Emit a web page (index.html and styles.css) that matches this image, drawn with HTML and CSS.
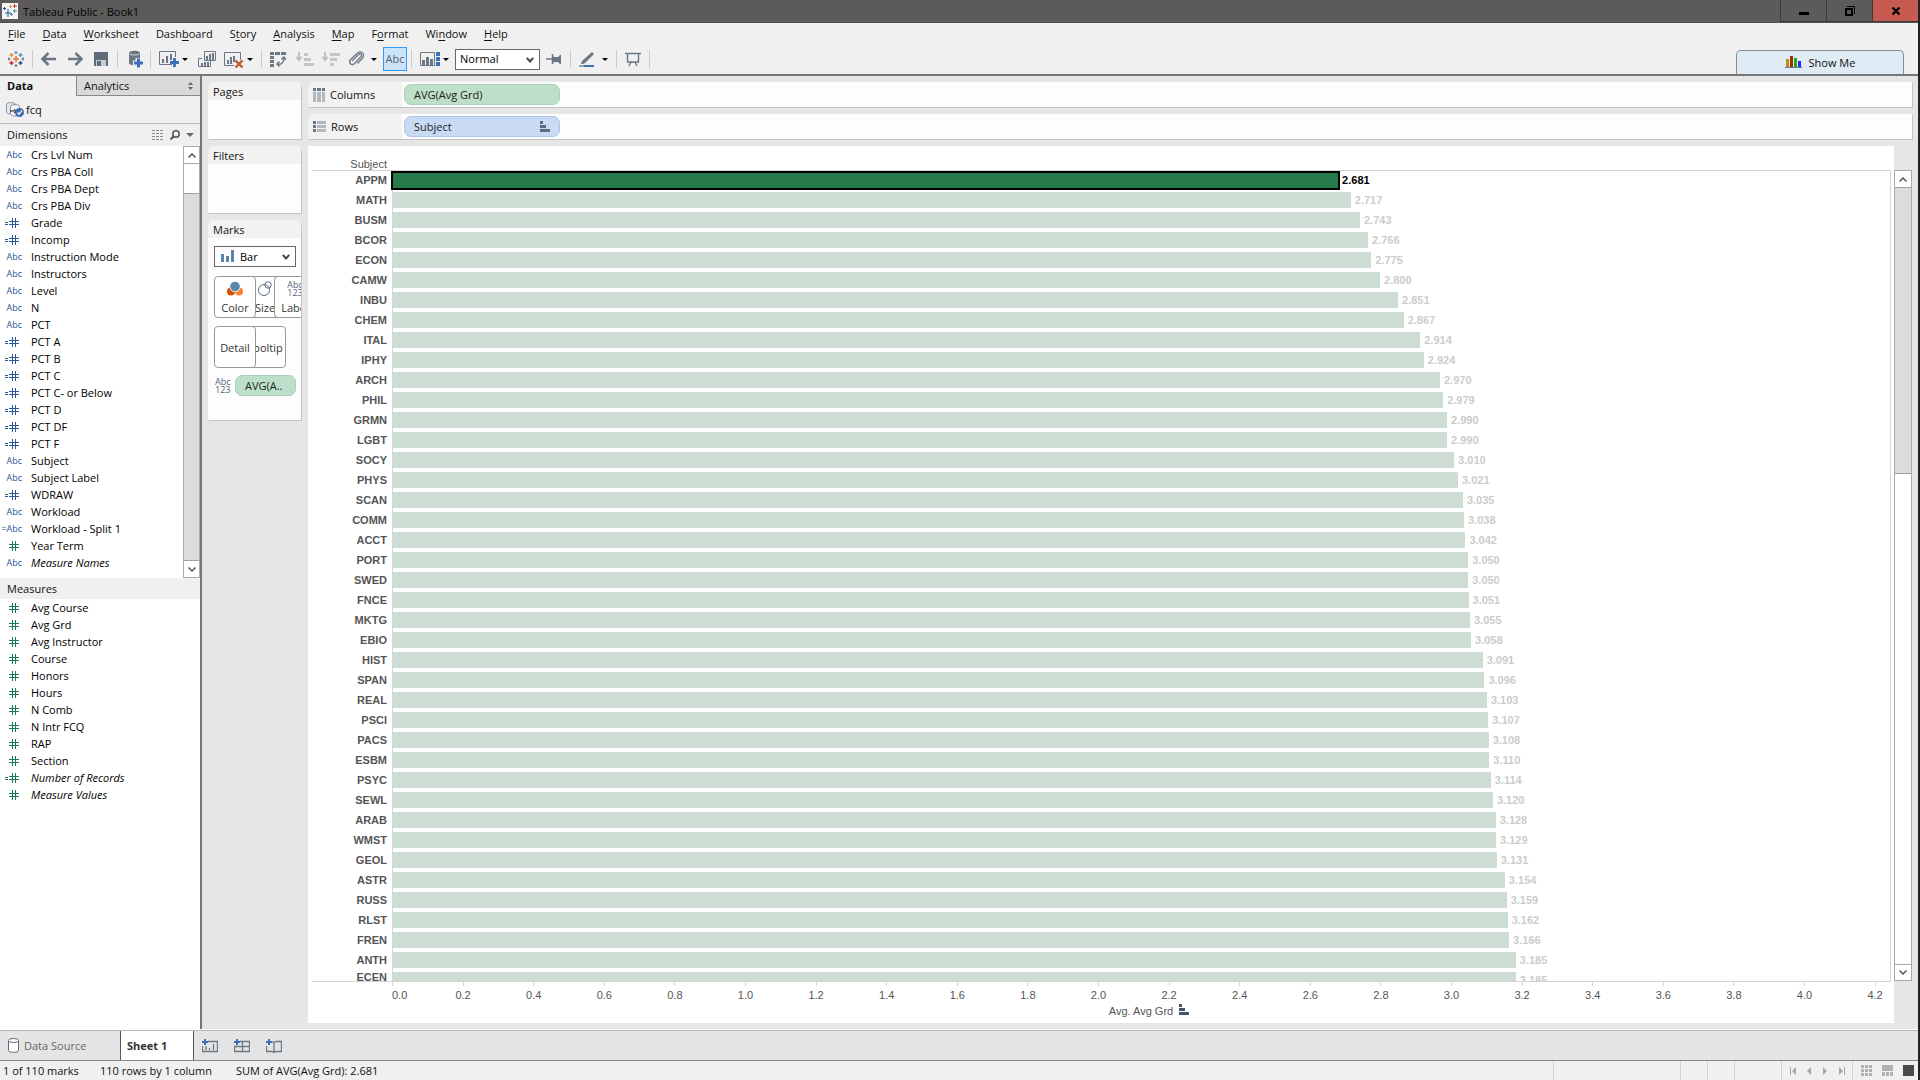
FILE: index.html
```html
<!DOCTYPE html>
<html lang="en">
<head>
<meta charset="utf-8">
<title>Tableau Public - Book1</title>
<link rel="stylesheet" href="styles.css">
</head>
<body>
<svg class="defs" width="0" height="0" aria-hidden="true">
  <symbol id="num" viewBox="0 0 10 10"><path d="M3.5 0v10M6.5 0v10M0 3.5h10M0 6.5h10" stroke="currentColor" fill="none" shape-rendering="crispEdges"/></symbol>
  <symbol id="calc" viewBox="0 0 14 10"><path d="M7.5 0v10M10.5 0v10M4 3.5h10M4 6.5h10M0 4.5h3M0 6.5h3" stroke="currentColor" fill="none" shape-rendering="crispEdges"/></symbol>
  <symbol id="sorted" viewBox="0 0 10 11"><path d="M0 0h3v3H0zM0 4h6v3H0zM0 8h10v3H0z" fill="currentColor"/></symbol>
  <symbol id="up" viewBox="0 0 8 5"><path d="M.5 4.500L4 1l3.500 3.500" stroke="#555" stroke-width="1.500" fill="none"/></symbol>
  <symbol id="down" viewBox="0 0 8 5"><path d="M.5 .5L4 4 7.500 .5" stroke="#555" stroke-width="1.500" fill="none"/></symbol>
</svg>
<div class="app">
  <header class="titlebar">
    <svg width="16" height="16" viewBox="0 0 16 16"><path d="M0 0h16v16H0z" fill="#f5f5f5"/><g fill="none"><path d="M6 6v8M3 10h6M2.500 4v3M1 5.500h3" stroke="#1f4e8c"/><path d="M8.500 2v3M7 3.500h3" stroke="#e8912d"/><path d="M12.500 1v4M11 3h4" stroke="#c0392b"/><path d="M12.500 6v4M11 8h4M9.500 10v3M8 11.500h3" stroke="#4a90a4"/></g></svg>
    <span class="window-title">Tableau Public - Book1</span>
    <div class="window-buttons">
      <button aria-label="Minimize"><svg width="10" height="10"><path d="M0 6h10v3H0z"/></svg></button>
      <button aria-label="Restore"><svg width="10" height="10"><path d="M1 3h6v6H1z" fill="none" stroke="#000" stroke-width="2"/><path d="M2 .5h7.500v7.500" fill="none" stroke="#000"/></svg></button>
      <button class="close" aria-label="Close"><svg width="10" height="10"><path d="M1.500 1.500l7 7M8.500 1.500l-7 7" stroke="#000" stroke-width="2.200"/></svg></button>
    </div>
  </header>

  <div class="bars">
    <div class="bars-left">
      <nav class="menu">
        <a href="#"><u>F</u>ile</a><a href="#"><u>D</u>ata</a><a href="#"><u>W</u>orksheet</a><a href="#">Dash<u>b</u>oard</a><a href="#">S<u>t</u>ory</a><a href="#"><u>A</u>nalysis</a><a href="#"><u>M</u>ap</a><a href="#">F<u>o</u>rmat</a><a href="#">Wi<u>n</u>dow</a><a href="#"><u>H</u>elp</a>
      </nav>
      <div class="toolbar">
        <button aria-label="Start page"><svg width="16" height="16"><g fill="none" stroke-width="1.300"><path d="M8 5v6M5 8h6" stroke="#e8762d" stroke-width="1.600"/><path d="M8 0v3M6.500 1.500h3M8 13v3M6.500 14.500h3" stroke="#7a8fb5"/><path d="M3.500 2v4M1.500 4h4" stroke="#e8912d"/><path d="M12.500 2v4M10.500 4h4" stroke="#5b9aa8"/><path d="M3.500 10v4M1.500 12h4" stroke="#c72035"/><path d="M12.500 10v4M10.500 12h4" stroke="#2d4a80"/><path d="M1 6.500v3M0 8h2.500M15 6.500v3M13.500 8H16" stroke="#6b7a99"/></g></svg></button>
        <i class="sep"></i>
        <button aria-label="Undo"><svg width="16" height="16"><path d="M15 8H2M7.500 2L1.500 8l6 6" fill="none" stroke="#6b7784" stroke-width="2.600"/></svg></button>
        <button aria-label="Redo"><svg width="16" height="16"><path d="M1 8h13M8.500 2l6 6-6 6" fill="none" stroke="#6b7784" stroke-width="2.600"/></svg></button>
        <button aria-label="Save"><svg width="16" height="16"><path d="M1 1h14v14H1z" fill="#5d6b7a"/><path d="M3 9h10v6H3z" fill="#c9ced4"/><path d="M4 10h4v5H4z" fill="#5d6b7a"/></svg></button>
        <i class="sep"></i>
        <button aria-label="New data source"><svg width="16" height="16"><path d="M3 2c0-3 11-3 11 0v10c0 3-11 3-11 0z" fill="#6b7784"/><path d="M3.500 2.500c0 2 10 2 10 0" stroke="#d5d9de" fill="none"/><path d="M12 7v10M7 12h10" stroke="#f0f0f0" stroke-width="5"/><path d="M12.500 7.500v9M8 12h9" stroke="#3d6fb6" stroke-width="3"/></svg></button>
        <i class="sep"></i>
        <button class="drop" aria-label="New worksheet"><svg width="20" height="16"><path d="M.5 .5h16v13H.5z" fill="none" stroke="#6b7784"/><path d="M3 8h2v4H3zM7 5h2v7H7zM11 3h2v9h-2z" fill="#6b7784"/><path d="M15 6v10M10 11h10" stroke="#f0f0f0" stroke-width="4"/><path d="M15.500 7v9M11 11.500h9" stroke="#3d6fb6" stroke-width="2.800"/></svg><b class="caret"></b></button>
        <button aria-label="Duplicate"><svg width="18" height="16"><path d="M6.500 .5h11v9h-11z" fill="#f0f0f0" stroke="#6b7784"/><path d="M4 7.500H.5v8h12V10" fill="none" stroke="#6b7784"/><path d="M8 5h2v4H8zM11 3h2v6h-2zM14 2h2v7h-2zM3 12h2v3H3zM6 11h2v4H6zM9 11h2v4H9z" fill="#6b7784"/></svg></button>
        <button class="drop" aria-label="Clear sheet"><svg width="20" height="16"><path d="M10 14.500H.5V1.500h16V9" fill="none" stroke="#6b7784"/><path d="M3 9h2v4H3zM6 6h2v7H6zM9 5h2v6H9z" fill="#6b7784"/><path d="M11.500 9.500l7 7M18.500 9.500l-7 7" stroke="#c4532f" stroke-width="2.400"/></svg><b class="caret"></b></button>
        <i class="sep"></i>
        <button aria-label="Swap rows and columns"><svg width="16" height="16"><path d="M0 1h4v3H0zM5 1h5v3H5zM11 1h5v3h-5zM0 5h4v3H0zM0 9h4v3H0zM0 13h4v3H0z" fill="#6b7784"/><path d="M7 13c4 1 7-1 7-6M11.500 8.500L14 6l2 2.500M9.500 10.500L7 13l2.500 2.500" fill="none" stroke="#6b7784" stroke-width="1.500"/></svg></button>
        <button aria-label="Sort ascending"><svg width="18" height="16"><path d="M3 1v8M.5 6L3 9l2.500-3" fill="none" stroke="#bfbfbf" stroke-width="2"/><path d="M8 2h4v3H8zM8 7h7v3H8zM8 12h10v3H8z" fill="#c6c6c6"/></svg></button>
        <button aria-label="Sort descending"><svg width="18" height="16"><path d="M3 1v8M.5 6L3 9l2.500-3" fill="none" stroke="#bfbfbf" stroke-width="2"/><path d="M8 2h10v3H8zM8 7h7v3H8zM8 12h4v3H8z" fill="#c6c6c6"/></svg></button>
        <button class="drop clip" aria-label="Group members"><svg width="18" height="16"><path d="M4 10l6.500-6.500c2-2 4 .5 2.500 2.200L6.500 12.500c-3 2.500-6.500-.5-4-4L9.500 2c3.500-3 8 1 5 5l-5 5.500" fill="none" stroke="#6b7784" stroke-width="1.300"/></svg><b class="caret"></b></button>
        <button class="abc" aria-pressed="true">Abc</button>
        <i class="sep"></i>
        <button class="drop" aria-label="Show/hide cards"><svg width="20" height="16"><path d="M.5 1.500h14v13H.5z" fill="none" stroke="#6b7784"/><path d="M2 9h3v5H2zM6 6h3v8H6zM10 8h3v6h-3z" fill="#6b7784"/><path d="M16 1h4v4h-4zM16 6h4v4h-4zM16 11h4v4h-4z" fill="#3d6fb6"/></svg><b class="caret"></b></button>
        <div class="select fit"><select aria-label="Fit"><option>Normal</option></select><svg class="chev" width="8" height="7"><path d="M.8 .8L4 4.500 7.200 .8" fill="none" stroke="#444" stroke-width="2"/></svg></div>
        <button aria-label="Fix axes"><svg width="16" height="16"><path d="M0 8h6M6.500 3v10" stroke="#6b7784" stroke-width="1.500"/><path d="M6 4l2 2h4l2-2h1v9h-1l-2-2H8l-2 2z" fill="#6b7784"/></svg></button>
        <i class="sep"></i>
        <button class="drop" aria-label="Highlight"><svg width="16" height="16"><path d="M13 1l2 2-9 9-2 1-2 0 1-3z" fill="#6b7784"/><path d="M0 14h5v2H0z" fill="#9aa3ad"/><path d="M5 14h10v2H5z" fill="#3d6fb6"/></svg><b class="caret"></b></button>
        <i class="sep"></i>
        <button aria-label="Presentation mode"><svg width="16" height="16"><path d="M0 2.500h16M2.500 3v8h11V3M6 11l-2 4M10 11l2 4" fill="none" stroke="#6b7784" stroke-width="1.400"/></svg></button>
        <i class="sep"></i>
      </div>
    </div>
    <button class="show-me"><svg width="17" height="13"><path d="M1 3h3v8H1z" fill="#c09000"/><path d="M5 0h3v11H5z" fill="#a03000"/><path d="M9 2h3v9H9z" fill="#22aa22"/><path d="M13 5h3v6h-3z" fill="#2a2aff"/><path d="M0 11h17v1H0z" fill="#66798c"/></svg>Show Me</button>
  </div>

  <div class="workspace">
    <aside class="side">
      <div class="side-tabs">
        <button class="side-tab active">Data</button>
        <button class="side-tab">Analytics<svg width="5" height="8"><path d="M0 3l2.500-3L5 3zM0 5l2.500 3L5 5z" fill="#666"/></svg></button>
      </div>
      <div class="source"><svg width="18" height="16"><path d="M.5 2.500c0-2.500 9-2.500 9 0V11c-3 2-9 1-9-1z" fill="#e6e9ec" stroke="#8b949e"/><path d="M4.500 4.500c0-2.500 9-2.500 9 0V13c-3 2-9 1-9-1z" fill="#f4f4f4" stroke="#8b949e"/><path d="M4 9h6M8 7l2 2-2 2" stroke="#222" fill="none"/><circle cx="13.500" cy="10.500" r="4.500" fill="#3d6fb6"/><path d="M11.500 10.500l1.500 1.700 3-3.500" stroke="#fff" fill="none" stroke-width="1.300"/></svg>fcq</div>
      <div class="section-head first"><span>Dimensions</span>
        <svg width="12" height="10"><path d="M0 .5h12M0 3.500h12M0 6.500h12M0 9.500h12" stroke="#8a8f96" stroke-dasharray="3 1"/></svg>
        <svg width="10" height="10"><circle cx="6" cy="4" r="3.200" fill="none" stroke="#555" stroke-width="1.500"/><path d="M4 6L.5 9.500" stroke="#555" stroke-width="2"/></svg>
        <svg width="8" height="4"><path d="M0 0h8L4 4z" fill="#667"/></svg>
      </div>
      <div class="dims">
        <ul class="fields">
          <li><i>Abc</i>Crs Lvl Num</li>
          <li><i>Abc</i>Crs PBA Coll</li>
          <li><i>Abc</i>Crs PBA Dept</li>
          <li><i>Abc</i>Crs PBA Div</li>
          <li><i><svg class="c"><use href="#calc"/></svg></i>Grade</li>
          <li><i><svg class="c"><use href="#calc"/></svg></i>Incomp</li>
          <li><i>Abc</i>Instruction Mode</li>
          <li><i>Abc</i>Instructors</li>
          <li><i>Abc</i>Level</li>
          <li><i>Abc</i>N</li>
          <li><i>Abc</i>PCT</li>
          <li><i><svg class="c"><use href="#calc"/></svg></i>PCT A</li>
          <li><i><svg class="c"><use href="#calc"/></svg></i>PCT B</li>
          <li><i><svg class="c"><use href="#calc"/></svg></i>PCT C</li>
          <li><i><svg class="c"><use href="#calc"/></svg></i>PCT C- or Below</li>
          <li><i><svg class="c"><use href="#calc"/></svg></i>PCT D</li>
          <li><i><svg class="c"><use href="#calc"/></svg></i>PCT DF</li>
          <li><i><svg class="c"><use href="#calc"/></svg></i>PCT F</li>
          <li><i>Abc</i>Subject</li>
          <li><i>Abc</i>Subject Label</li>
          <li><i><svg class="c"><use href="#calc"/></svg></i>WDRAW</li>
          <li><i>Abc</i>Workload</li>
          <li><i>=Abc</i>Workload - Split 1</li>
          <li class="green"><i><svg class="n"><use href="#num"/></svg></i>Year Term</li>
          <li><i>Abc</i><em>Measure Names</em></li>
        </ul>
        <div class="scroll dims-scroll"><button aria-label="Scroll up"><svg width="8" height="5"><use href="#up"/></svg></button><div class="track"><div class="thumb"></div></div><button aria-label="Scroll down"><svg width="8" height="5"><use href="#down"/></svg></button></div>
      </div>
      <div class="section-head"><span>Measures</span></div>
      <ul class="fields measures">
        <li><i><svg class="n"><use href="#num"/></svg></i>Avg Course</li>
        <li><i><svg class="n"><use href="#num"/></svg></i>Avg Grd</li>
        <li><i><svg class="n"><use href="#num"/></svg></i>Avg Instructor</li>
        <li><i><svg class="n"><use href="#num"/></svg></i>Course</li>
        <li><i><svg class="n"><use href="#num"/></svg></i>Honors</li>
        <li><i><svg class="n"><use href="#num"/></svg></i>Hours</li>
        <li><i><svg class="n"><use href="#num"/></svg></i>N Comb</li>
        <li><i><svg class="n"><use href="#num"/></svg></i>N Intr FCQ</li>
        <li><i><svg class="n"><use href="#num"/></svg></i>RAP</li>
        <li><i><svg class="n"><use href="#num"/></svg></i>Section</li>
        <li><i><svg class="c"><use href="#calc"/></svg></i><em>Number of Records</em></li>
        <li><i><svg class="n"><use href="#num"/></svg></i><em>Measure Values</em></li>
      </ul>
    </aside>

    <div class="cards">
      <section class="card pages"><h2>Pages</h2></section>
      <section class="card filters"><h2>Filters</h2></section>
      <section class="card marks"><h2>Marks</h2>
        <div class="select mark-type"><svg class="mark-icon" width="13" height="12"><path d="M0 4h3v8H0zM5 6h3v6H5zM10 0h3v12h-3z" fill="#5a86ad"/></svg><select aria-label="Mark type"><option>Bar</option></select><svg class="chev" width="8" height="7"><path d="M.8 .8L4 4.500 7.200 .8" fill="none" stroke="#444" stroke-width="2"/></svg></div>
        <div class="mark-buttons">
          <button class="front"><svg width="16" height="16"><circle cx="4" cy="10.500" r="4" fill="#d35400"/><circle cx="12" cy="10.500" r="4" fill="#f58231"/><circle cx="8" cy="5.500" r="5.500" fill="#fff"/><circle cx="8" cy="5.500" r="4.800" fill="#5a86ad"/></svg>Color</button>
          <button><svg width="16" height="16"><circle cx="7" cy="9" r="5.500" fill="none" stroke="#5d6b80"/><circle cx="11" cy="4" r="3.200" fill="none" stroke="#5d6b80"/></svg>Size</button>
          <button class="front"><span class="abc123">Abc<br>123</span>Label</button>
        </div>
        <div class="mark-buttons">
          <button class="front">Detail</button>
          <button>Tooltip</button>
        </div>
        <div class="mark-pill"><span class="abc123">Abc<br>123</span><button class="pill green-pill">AVG(A..</button></div>
      </section>
    </div>

    <main class="work">
      <div class="shelf"><div class="shelf-label"><svg width="12" height="14"><path d="M0 0h3v3H0zM4 0h4v3H4zM9 0h3v3H9z" fill="#6b7784"/><path d="M0 4h3v10H0zM4 4h4v10H4zM9 4h3v10H9z" fill="#b4b9c0"/></svg>Columns</div><button class="pill green-pill">AVG(Avg Grd)</button></div>
      <div class="shelf"><div class="shelf-label"><svg width="13" height="11"><path d="M0 0h3v3H0zM0 4h3v3H0zM0 8h3v3H0z" fill="#6b7784"/><path d="M4 0h9v3H4zM4 4h9v3H4zM4 8h9v3H4z" fill="#b4b9c0"/></svg>Rows</div><button class="pill blue-pill">Subject<svg width="10" height="11"><use href="#sorted"/></svg></button></div>
      <div class="view">
        <div class="chart">
          <div class="chart-head">Subject</div>
          <div class="plot" id="plot"></div>
          <div class="axis" id="axis"></div>
          <div class="axis-title">Avg. Avg Grd<svg width="10" height="11"><use href="#sorted"/></svg></div>
        </div>
        <div class="scroll view-scroll"><button aria-label="Scroll up"><svg width="8" height="5"><use href="#up"/></svg></button><div class="track"><div class="thumb"></div></div><button aria-label="Scroll down"><svg width="8" height="5"><use href="#down"/></svg></button></div>
      </div>
    </main>
  </div>

  <nav class="sheet-tabs">
    <button class="sheet-tab source-tab"><svg width="11" height="15"><path d="M.5 2.500v10c0 2.500 10 2.500 10 0v-10" fill="#fff" stroke="#5d6b80"/><ellipse cx="5.500" cy="2.500" rx="5" ry="2" fill="#fff" stroke="#5d6b80"/></svg>Data Source</button>
    <button class="sheet-tab current">Sheet 1</button>
    <button class="new-tab" aria-label="New worksheet"><svg width="16" height="14"><path d="M6 2.500h9.500v10H.5V7M4 11V7M7.500 11V9M11.500 11V5" fill="none" stroke="#6b7784" stroke-width="1.300"/><path d="M3 0v6M0 3h6" stroke="#3d6fb6" stroke-width="2"/></svg></button>
    <button class="new-tab" aria-label="New dashboard"><svg width="16" height="14"><path d="M6 2.500h9.500v10H.5V7M0 7.500h16M8.500 2v11" fill="none" stroke="#6b7784" stroke-width="1.300"/><path d="M3 0v6M0 3h6" stroke="#3d6fb6" stroke-width="2"/></svg></button>
    <button class="new-tab" aria-label="New story"><svg width="16" height="14"><path d="M.5 7v5.500H6l2 1 2-1h5.500v-10H10l-2 1-2-1M8 3v10" fill="none" stroke="#6b7784" stroke-width="1.300"/><path d="M3 0v6M0 3h6" stroke="#3d6fb6" stroke-width="2"/></svg></button>
  </nav>

  <footer class="status">
    <span class="marks-count">1 of 110 marks</span><span class="row-count">110 rows by 1 column</span><span class="sum">SUM of AVG(Avg Grd): 2.681</span>
    <div class="cell w126"></div><div class="cell w26"></div><div class="cell w26"></div><div class="cell w46"></div>
    <div class="cell nav">
      <button aria-label="First"><svg width="7" height="8"><path d="M0 0h1v8H0zM6 0v8L2 4z"/></svg></button>
      <button aria-label="Previous"><svg width="7" height="8"><path d="M5 0v8L1 4z"/></svg></button>
      <button aria-label="Next"><svg width="7" height="8"><path d="M1 0v8l4-4z"/></svg></button>
      <button aria-label="Last"><svg width="7" height="8"><path d="M6 0h1v8H6zM1 0v8l4-4z"/></svg></button>
    </div>
    <div class="cell modes">
      <button aria-label="Sheet sorter"><svg width="11" height="11"><path d="M0 0h3v3H0zM4 0h3v3H4zM8 0h3v3H8zM0 4h3v3H0zM4 4h3v3H4zM8 4h3v3H8zM0 8h3v3H0zM4 8h3v3H4zM8 8h3v3H8z"/></svg></button>
      <button aria-label="Filmstrip"><svg width="11" height="11"><path d="M0 0h11v6H0zM0 7h3v4H0zM4 7h3v4H4zM8 7h3v4H8z"/></svg></button>
      <button class="on" aria-label="Tabs"><svg width="11" height="11"><path d="M0 0h11v11H0z"/></svg></button>
    </div>
  </footer>
</div>
<script src="chart.js"></script>
</body>
</html>
```

FILE: styles.css
```css
* { box-sizing: border-box; }
body { margin: 0; font: 11px/16px "Open Sans", "Noto Sans", sans-serif; color: #111; background: #222; }
button { font: inherit; color: inherit; background: none; border: 0; padding: 0; }
a { color: inherit; text-decoration: none; }
ul { list-style: none; margin: 0; padding: 0; }
h2 { margin: 0; font-size: 11px; font-weight: 400; }
svg { display: block; flex: none; }
.defs { position: absolute; }

.app { height: 100vh; display: flex; flex-direction: column; border-right: 2px solid #222; background: #f0f0f0; overflow: hidden; }

.titlebar { height: 23px; flex: none; display: flex; background: #5c5b59; padding-left: 2px; border-bottom: 1px solid #52514f; align-items: center; color: #000; }
.window-title { margin-left: 5px; flex: 1; padding-top: 2px; }
.window-buttons { display: flex; align-self: stretch; }
.window-buttons button { width: 46px; border-left: 1px solid #3a3a3a; border-bottom: 1px solid #3a3a3a; display: flex; align-items: center; justify-content: center; }
.window-buttons .close { background: #c75b52; }

.bars { display: flex; justify-content: space-between; align-items: flex-end; height: 53px; flex: none; border-bottom: 2px solid #77777a; padding-right: 14px; }
.bars-left { display: flex; flex-direction: column; height: 51px; }
.menu { display: flex; gap: 17px; padding: 3px 8px 0; height: 22px; }
.menu u { text-underline-offset: 2px; }
.toolbar { display: flex; align-items: center; gap: 10px; padding-left: 8px; height: 28px; }
.toolbar button { width: 16px; display: flex; align-items: center; height: 16px; }
.toolbar svg { overflow: visible; }
.toolbar .drop { width: 29px; justify-content: space-between; }
.caret { border: 3px solid transparent; border-top: 3px solid #000; border-bottom: 0; }
.sep { width: 1px; height: 18px; background: #ccc; margin: 0 -2px; }
.toolbar .abc { width: 24px; height: 24px; border: 1px solid #3399ff; background: #cce4fb; margin: 0 -4px; justify-content: center; color: #56616e; }
.select { position: relative; background: #fff; border: 1px solid #666; height: 21px; }
.select select { appearance: none; border: 0; background: none; font: inherit; color: #000; width: 100%; height: 19px; padding: 0 4px; display: block; }
.chev { position: absolute; right: 5px; top: 7px; }
.fit { width: 85px; margin: 0 -4px; }
.show-me { width: 168px; height: 24px; border: 1px solid #8c8c8c; border-bottom: 0; border-radius: 5px 5px 0 0; background: #dfebf5; display: flex; align-items: center; justify-content: center; gap: 7px; }

.workspace { flex: 1; min-height: 0; display: flex; background: #e6e6e6; border-bottom: 1px solid #fff; }
.side { width: 202px; flex: none; background: #fff; border-right: 2px solid #77777a; display: flex; flex-direction: column; }
.side-tabs { display: flex; height: 20px; }
.side-tab { width: 76px; background: #f0f0f0; text-align: left; padding: 0 7px; font-weight: 700; }
.side-tab + .side-tab { flex: 1; width: auto; font-weight: 400; background: #d9d9d9; border-left: 1px solid #888; border-bottom: 1px solid #888; display: flex; align-items: center; justify-content: space-between; }
.source { background: #f0f0f0; height: 28px; padding-left: 6px; gap: 2px; display: flex; align-items: center; border-bottom: 1px solid #bbb; }
.section-head { background: #f0f0f0; height: 21px; flex: none; padding: 0 7px; display: flex; align-items: center; gap: 6px; }
.section-head.first { height: 22px; padding-right: 6px; }
.section-head span { flex: 1; }
.dims { display: flex; height: 432px; flex: none; }
.dims .fields { flex: 1; }
.fields li { height: 17px; display: flex; align-items: center; color: #000; }
.fields li i { width: 31px; padding-right: 9px; display: flex; justify-content: flex-end; font-style: normal; font-size: 9px; color: #2c5797; }
.fields .n { width: 10px; height: 10px; margin-right: 3px; }
.fields .c { width: 14px; height: 10px; margin-right: 3px; }
.fields .green i, .measures li i { color: #1b7a55; }

.scroll { display: flex; flex-direction: column; width: 17px; border: 1px solid #aaa; background: #fff; }
.scroll button { height: 16px; display: flex; align-items: center; justify-content: center; flex: none; }
.track { flex: 1; display: flex; flex-direction: column; }
.thumb { background: #dcdcdc; border: 1px solid #a0a0a0; border-width: 1px 0; }
.dims-scroll .track { border-top: 1px solid #aaa; padding-top: 29px; }
.dims-scroll .thumb { flex: 1; }
.view-scroll .thumb { height: 37%; }
.view-scroll button:last-child { border-top: 1px solid #aaa; }

.cards { width: 93px; flex: none; margin: 6px 0 0 6px; display: flex; flex-direction: column; gap: 7px; }
.card { background: #fdfdfd; border-radius: 6px 6px 0 0; box-shadow: 1px 1px 0 #c4c4c4; overflow: hidden; }
.card h2 { background: #f2f2f1; height: 18px; padding: 2px 5px 0; }
.pages { height: 57px; }
.filters { height: 67px; }
.marks { height: 200px; }
.mark-type { margin: 8px 5px 0 6px; }
.mark-type select { padding-left: 25px; }
.mark-icon { position: absolute; left: 6px; top: 3px; }
.mark-buttons { display: flex; margin: 9px 0 0 6px; }
.mark-buttons + .mark-buttons { margin-top: 8px; }
.mark-buttons button { width: 42px; height: 42px; flex: none; border: 1px solid #999; border-radius: 4px; background: #fff; display: flex; flex-direction: column; align-items: center; justify-content: center; gap: 3px; padding-top: 2px; color: #333; }
.mark-buttons button + button { margin-left: -12px; }
.mark-buttons .front { position: relative; z-index: 1; }
.abc123 { font-size: 9px; line-height: 8px; color: #56657c; }
.mark-pill { display: flex; align-items: center; justify-content: space-between; padding: 7px 5px 0 7px; }
.mark-pill .pill { width: 61px; }

.work { flex: 1; min-width: 0; margin: 6px 6px 6px 7px; display: flex; flex-direction: column; gap: 7px; }
.shelf { height: 25px; flex: none; background: #fdfdfd; box-shadow: 1px 1px 0 #c4c4c4; display: flex; align-items: center; border-radius: 6px 0 0 0; overflow: hidden; }
.shelf-label { width: 94px; height: 25px; background: #f2f2f1; display: flex; align-items: center; gap: 5px; padding-left: 5px; margin-right: 2px; }
.pill { width: 156px; height: 21px; border-radius: 7px; display: flex; align-items: center; justify-content: space-between; padding: 0 9px; color: #222; }
.green-pill { background: #bedfca; border: 1px solid #a9cfb8; }
.blue-pill { background: #c8daf4; border: 1px solid #aac5ea; }
.pill svg { color: #5d6b7a; }
.view { flex: 1; min-height: 0; display: flex; }
.chart { flex: 1; min-width: 0; background: #fff; padding: 0 3px 0 4px; display: flex; flex-direction: column; font: 11px/14px "Liberation Sans", Arial, sans-serif; color: #555; }
.view-scroll { width: 18px; margin: 24px 0 42px; }
.chart-head { width: 75px; text-align: right; height: 24px; padding-top: 11px; flex: none; }
.plot { flex: 1; min-height: 0; overflow: hidden; border-top: 1px solid #d4d4d4; border-bottom: 1px solid #d4d4d4; border-right: 1px solid #d4d4d4; display: flex; flex-direction: column; font-weight: 700; }
.row { display: flex; height: 20px; flex: none; }
.row:first-child { height: 19px; }
.row:last-child { flex: 1; min-height: 0; overflow: hidden; }
.name { width: 80px; flex: none; text-align: right; padding-right: 5px; align-self: center; }
.row:last-child .name { align-self: flex-start; }
.lane { flex: 1; display: flex; border-left: 1px solid #d4d4d4; padding: 2px 0; align-items: center; }
.row:last-child .lane { align-items: flex-start; }
.bar { height: 16px; flex: none; background: #cdddd3; }
.value { margin-left: 4px; line-height: 16px; color: #ccc; }
.row.selected .lane { padding: 0; }
.row.selected .name, .selected .value { line-height: 18px; align-self: flex-start; }
.selected .bar { height: 19px; background: #277a4c; border: 2px solid #000; box-sizing: content-box; height: 15px; border-left-width: 2px; margin-left: -2px; }
.selected .value { color: #000; margin-left: 2px; }
.axis { position: relative; height: 20px; margin-left: 80px; flex: none; }
.tick { position: absolute; top: 0; width: 41px; margin-left: -20px; text-align: center; }
.tick::before { content: ""; display: block; width: 1px; height: 4px; margin: 0 auto 2px; background: #d4d4d4; }
.tick:first-child { margin-left: 0; text-align: left; text-indent: 2px; }
.tick:first-child::before { margin-left: 0; }
.axis-title { margin-left: 80px; height: 21px; padding: 2px 0 0 15px; display: flex; justify-content: center; gap: 6px; flex: none; }
.axis-title svg { color: #44546e; }

.sheet-tabs { height: 31px; flex: none; background: #e4e4e4; border-top: 1px solid #b5b9b5; border-bottom: 1px solid #8a8a8a; display: flex; align-items: center; }
.sheet-tab { align-self: stretch; display: flex; align-items: center; }
.source-tab { width: 120px; padding-left: 8px; gap: 5px; color: #666; }
.current { width: 74px; background: #fff; border: 1px solid #555; border-width: 0 1px; padding-left: 6px; font-weight: 700; color: #333; }
.new-tab { width: 16px; margin: 0 8px; }
.status { height: 19px; flex: none; display: flex; align-items: center; padding-left: 3px; }
.marks-count { width: 97px; }
.row-count { width: 136px; }
.sum { flex: 1; }
.cell { border-left: 1px solid #d0d0d0; align-self: stretch; }
.w126 { width: 127px; }
.w26 { width: 27px; }
.w46 { width: 47px; }
.nav { width: 71px; display: flex; align-items: center; padding-left: 8px; gap: 9px; fill: #a6a6a6; }
.modes { width: 66px; display: flex; align-items: center; padding-left: 8px; gap: 10px; fill: #b0b0b0; }
.modes .on { fill: #4a4a4a; }
```

FILE: chart.js
```javascript
const AXIS_MAX = 4.2465;
const rows = [
  ["APPM", 2.681], ["MATH", 2.717], ["BUSM", 2.743], ["BCOR", 2.766], ["ECON", 2.775],
  ["CAMW", 2.800], ["INBU", 2.851], ["CHEM", 2.867], ["ITAL", 2.914], ["IPHY", 2.924],
  ["ARCH", 2.970], ["PHIL", 2.979], ["GRMN", 2.990], ["LGBT", 2.990], ["SOCY", 3.010],
  ["PHYS", 3.021], ["SCAN", 3.035], ["COMM", 3.038], ["ACCT", 3.042], ["PORT", 3.050],
  ["SWED", 3.050], ["FNCE", 3.051], ["MKTG", 3.055], ["EBIO", 3.058], ["HIST", 3.091],
  ["SPAN", 3.096], ["REAL", 3.103], ["PSCI", 3.107], ["PACS", 3.108], ["ESBM", 3.110],
  ["PSYC", 3.114], ["SEWL", 3.120], ["ARAB", 3.128], ["WMST", 3.129], ["GEOL", 3.131],
  ["ASTR", 3.154], ["RUSS", 3.159], ["RLST", 3.162], ["FREN", 3.166], ["ANTH", 3.185],
  ["ECEN", 3.185]
];
const percent = v => (v / AXIS_MAX * 100).toFixed(3) + "%";
document.getElementById("plot").innerHTML = rows.map(([name, v], i) =>
  `<div class="row${i === 0 ? " selected" : ""}"><div class="name">${name}</div>` +
  `<div class="lane"><div class="bar" style="width:${percent(v)}"></div>` +
  `<div class="value">${v.toFixed(3)}</div></div></div>`).join("");
document.getElementById("axis").innerHTML = Array.from({ length: 22 }, (_, i) =>
  `<div class="tick" style="left:${percent(i / 5)}">${(i / 5).toFixed(1)}</div>`).join("");
```
